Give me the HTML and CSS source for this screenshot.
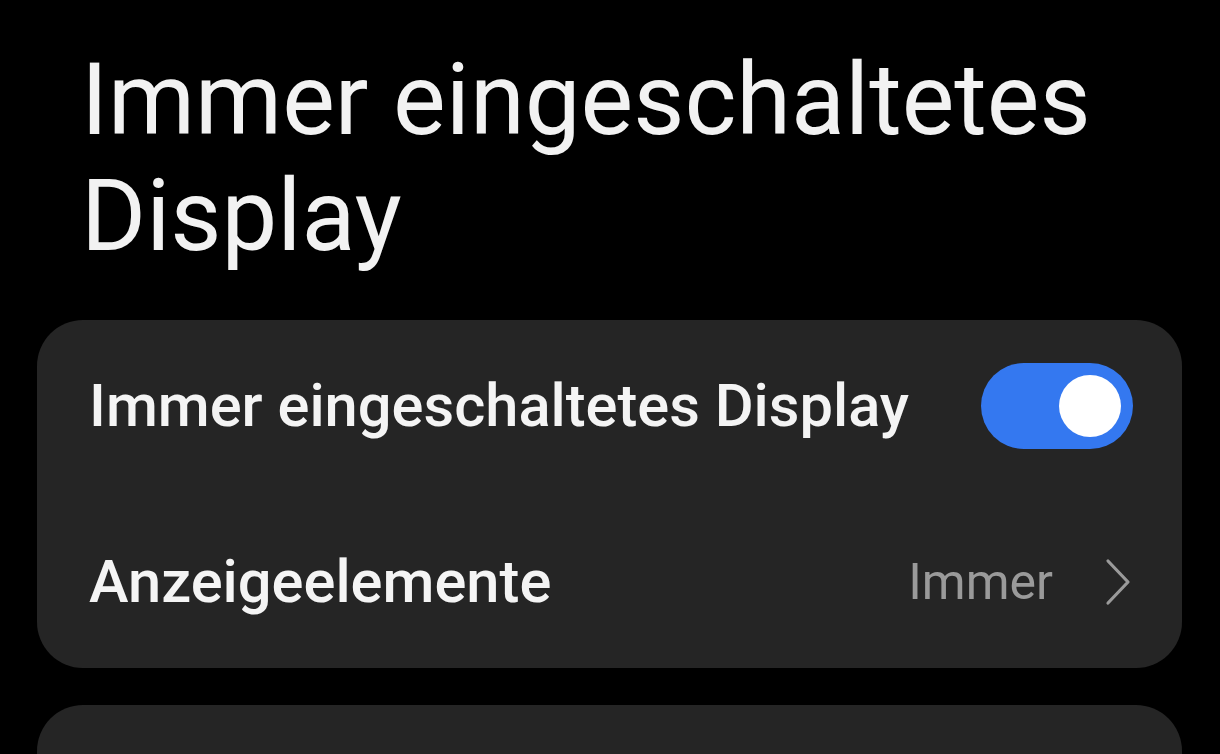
FILE: index.html
```html
<!DOCTYPE html>
<html lang="de">
<head>
<meta charset="utf-8">
<link rel="stylesheet" href="styles.css">
</head>
<body>
<h1 class="title">Immer eingeschaltetes Display</h1>
<section class="card">
  <div class="row row1">
    <span class="label">Immer eingeschaltetes Display</span>
    <span class="toggle"><span class="knob"></span></span>
  </div>
  <div class="row row2">
    <span class="label">Anzeigeelemente</span>
    <span class="value">Immer
      <svg class="chev" width="26" height="48" viewBox="0 0 26 48"><path d="M3 3 L23 24 L3 45" fill="none" stroke="#9a9a9a" stroke-width="3.2" stroke-linecap="round" stroke-linejoin="round"/></svg>
    </span>
  </div>
</section>
<section class="card card2"></section>
</body>
</html>
```
FILE: styles.css
```css
html, body {
  margin: 0;
  padding: 0;
  background: #000;
  width: 1220px;
  height: 754px;
  overflow: hidden;
  font-family: Roboto, "Noto Sans", sans-serif;
  color: #f2f2f2;
}
.title {
  margin: 0;
  padding: 42px 60px 0 81px;
  font-size: 99.3px;
  font-weight: 400;
  line-height: 116px;
  height: 278px;
  box-sizing: border-box;
  letter-spacing: 0;
}
.card {
  margin: 42px 38px 0 37px;
  background: #252525;
  border-radius: 46px;
  display: flex;
  flex-direction: column;
  padding: 0 49px 0 52px;
}
.row {
  display: flex;
  align-items: center;
  justify-content: space-between;
}
.row1 {
  height: 172px;
}
.row2 {
  height: 176px;
  padding-top: 4px;
  box-sizing: border-box;
}
.label {
  font-size: 59.6px;
  font-weight: 500;
  color: #f4f4f4;
}
.toggle {
  width: 152px;
  height: 86px;
  border-radius: 43px;
  background: #3478f0;
  display: flex;
  align-items: center;
  justify-content: flex-end;
  padding-right: 12px;
  box-sizing: border-box;
}
.knob {
  width: 62px;
  height: 62px;
  border-radius: 50%;
  background: #fff;
}
.value {
  display: flex;
  align-items: center;
  gap: 52px;
  font-size: 50px;
  color: #9a9a9a;
}
.chev {
  display: block;
  margin-right: 2px;
}
.card2 {
  margin-top: 37px;
  height: 49px;
  border-radius: 46px 46px 0 0;
}
```
